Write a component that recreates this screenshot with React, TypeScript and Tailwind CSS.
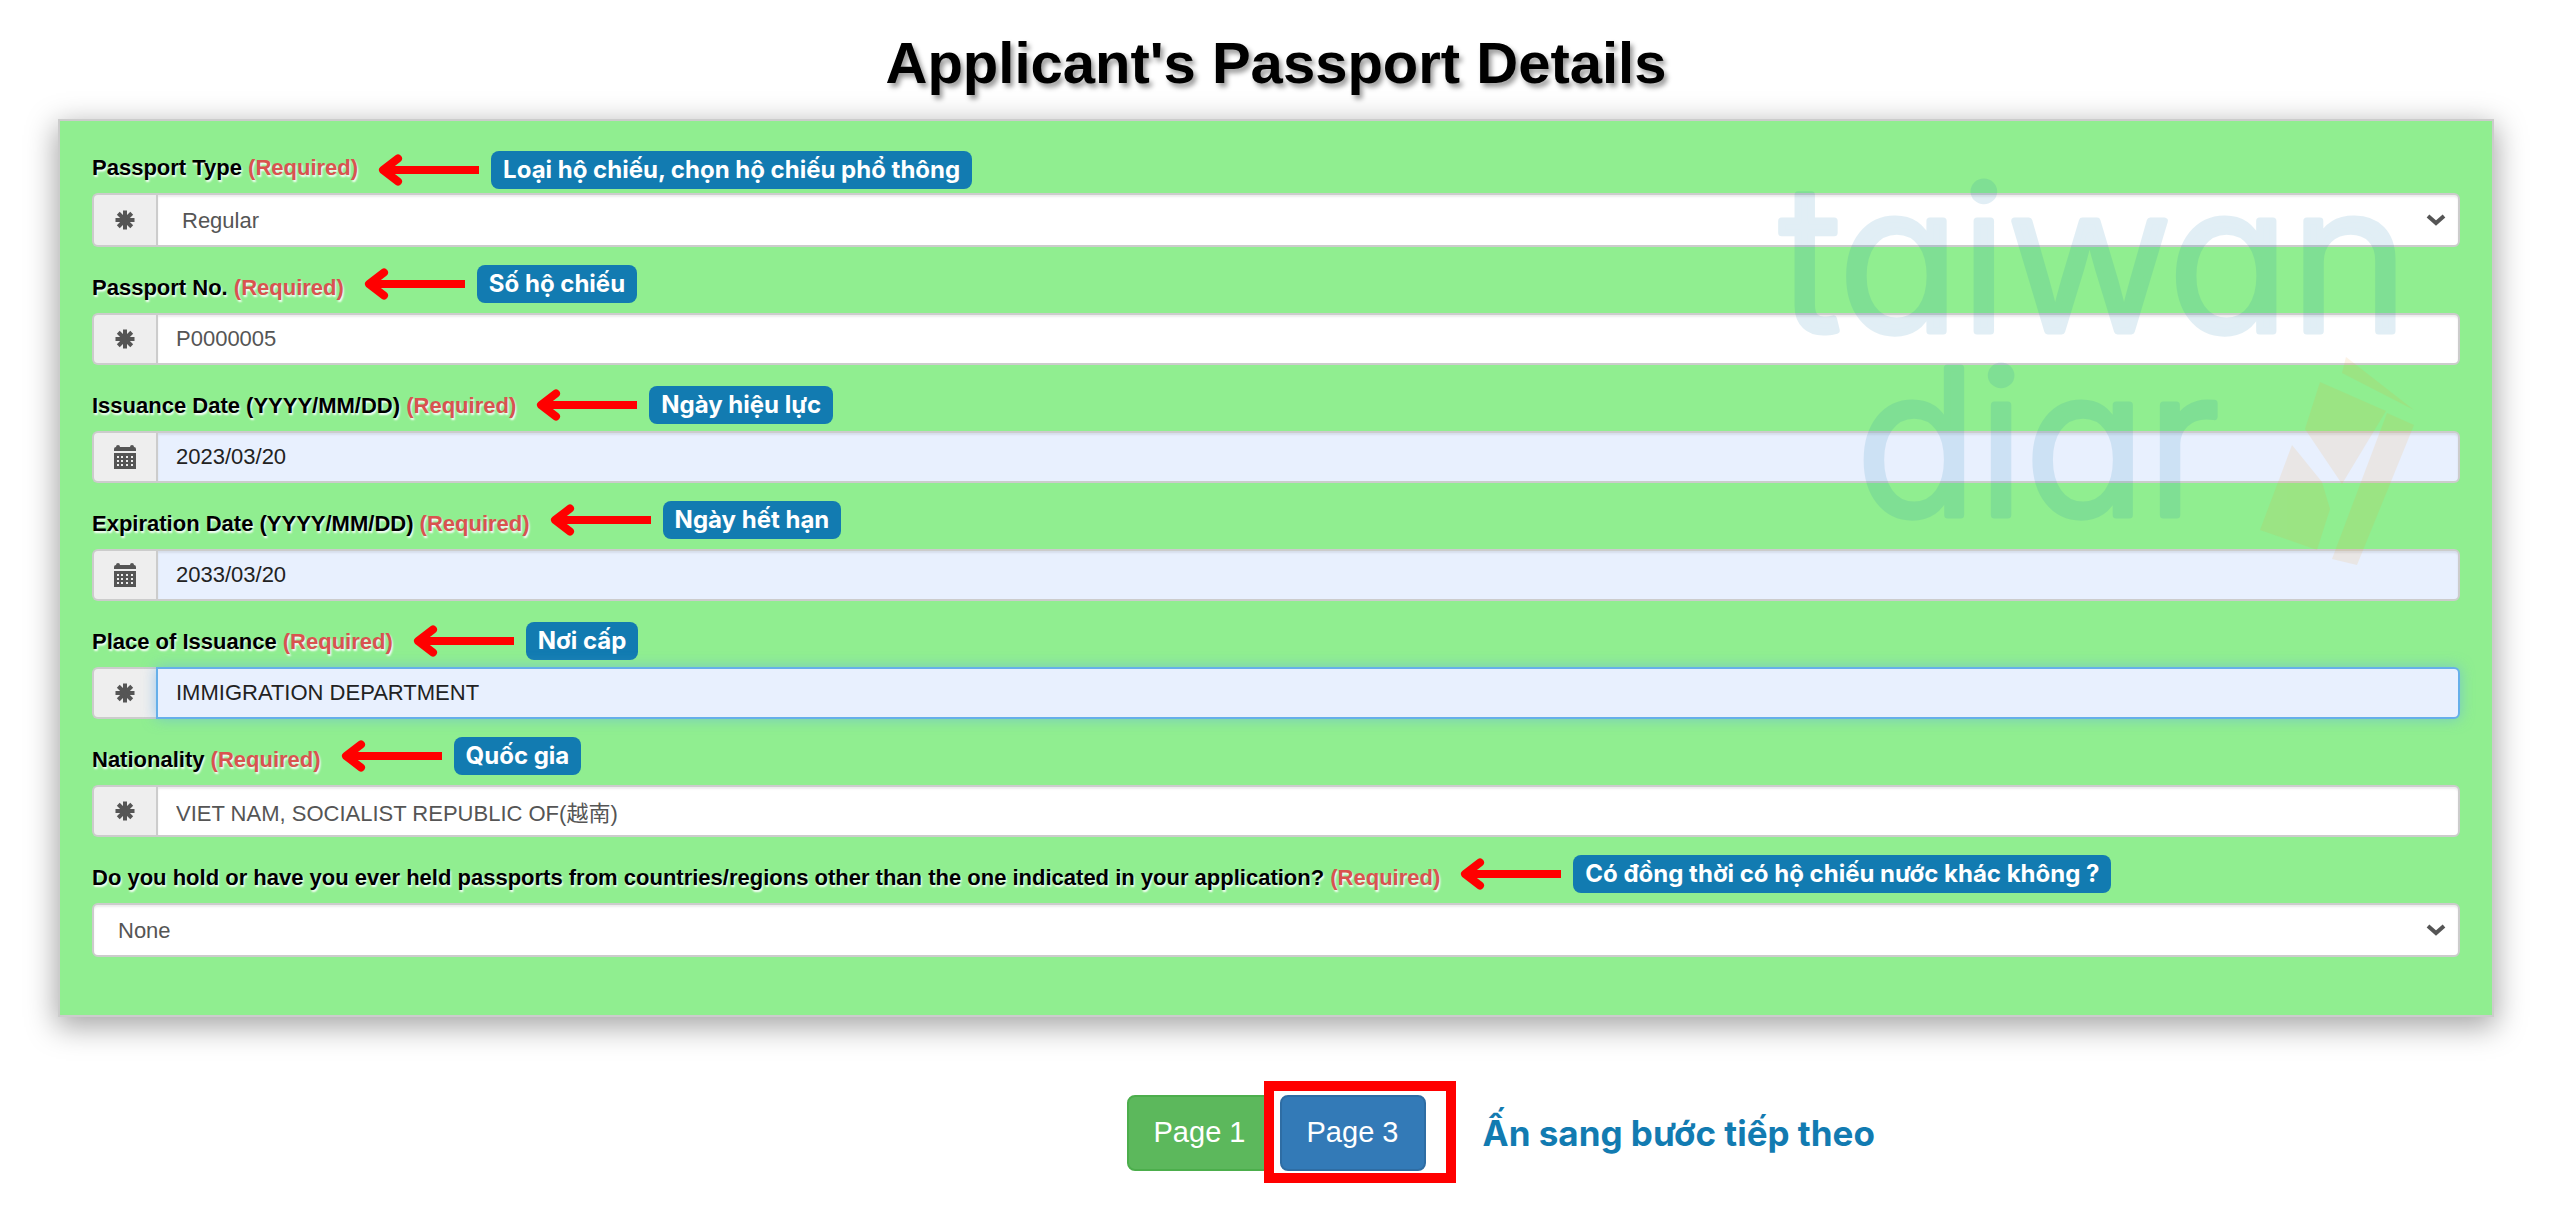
import { ReactNode } from "react";

const asteriskAngles = [0, 45, 90, 135];

function AsteriskIcon() {
  return (
    <svg viewBox="0 0 20 20" className="size-5" stroke="#555" strokeWidth="4">
      {asteriskAngles.map((angle) => (
        <path key={angle} d="M10 0.5V19.5" transform={`rotate(${angle} 10 10)`} />
      ))}
    </svg>
  );
}

function CalendarIcon() {
  return (
    <svg viewBox="0 0 22 24" className="h-6 w-[22px]" fill="#555">
      <path d="M0 4Q0 2 2 2Q2 0 4 0T6 2H16Q16 0 18 0T20 2Q22 2 22 4V6H0z" />
      <path
        fillRule="evenodd"
        d="M0 8h22v16H0zM3 11v2h2v-2zM7 11v2h2v-2zM12 11v2h2v-2zM17 11v2h2v-2zM3 15v2h2v-2zM7 15v2h2v-2zM12 15v2h2v-2zM17 15v2h2v-2zM3 19v2h2v-2zM7 19v2h2v-2zM12 19v2h2v-2zM17 19v2h2v-2z"
      />
    </svg>
  );
}

function Arrow() {
  return (
    <svg
      viewBox="0 0 101 32"
      className="h-8 w-[101px] shrink-0"
      fill="none"
      stroke="#ff0000"
      strokeWidth="8"
    >
      <path d="M101 16H8" />
      <path d="M20 4.500L5 16L20 27.500" strokeLinecap="round" strokeLinejoin="round" />
    </svg>
  );
}

function Chevron() {
  return (
    <svg
      viewBox="0 0 20 12"
      className="absolute right-[14px] h-3 w-5 pointer-events-none"
      fill="none"
      stroke="#555"
      strokeWidth="4"
    >
      <path d="M2 2L10 9L18 2" />
    </svg>
  );
}

function Watermark() {
  return (
    <svg
      viewBox="0 0 680 400"
      className="absolute top-[60px] right-8 w-[680px] overflow-visible pointer-events-none"
      aria-hidden="true"
    >
      <g
        fill="#0f7bb0"
        stroke="#0f7bb0"
        strokeWidth="7"
        strokeLinejoin="round"
        opacity="0.12"
        fontSize="202"
        className="font-[Inter,sans-serif] font-light [font-feature-settings:'cv11']"
      >
        <text x="0" y="150">
          taiwan
        </text>
        <text x="76" y="334">
          diar
        </text>
      </g>
      <g fill="#f59a23" opacity="0.11">
        <path d="M566 176L634 229L562 192z" />
        <path d="M540 201L606 230L562 303L525 248z" />
        <path d="M512 264L542 301L550 328L537 369L480 349z" />
        <path d="M607 232L634 244L577 384L552 378z" />
      </g>
    </svg>
  );
}

interface FieldProps {
  id: string;
  label: string;
  note: string;
  noteAlign: string;
  icon?: ReactNode;
  children: ReactNode;
}

function Field({ id, label, note, noteAlign, icon, children }: FieldProps) {
  return (
    <div>
      <div className="flex h-11 mb-1 whitespace-nowrap">
        <label
          htmlFor={id}
          className="self-center text-[22px] font-bold text-black [text-shadow:1px_2px_2px_#fff]"
        >
          {label} <span className="text-[#d9534f]">(Required)</span>
        </label>
        <div className={`flex items-center ml-5 gap-3 ${noteAlign}`}>
          <Arrow />
          <span className="flex items-center h-[38px] px-3 rounded-lg bg-[#127bb1] text-white text-2xl font-bold font-[Inter,sans-serif]">
            {note}
          </span>
        </div>
      </div>
      <div className="flex">
        {icon && (
          <span className="flex items-center justify-center w-16 border-2 border-r-0 border-[#ccc] rounded-l-md bg-[#eee]">
            {icon}
          </span>
        )}
        {children}
      </div>
    </div>
  );
}

const inputClass =
  "flex-1 h-[52px] px-[18px] text-[22px] border-2 rounded-r-md outline-none";
const shadowClass = "border-[#ccc] shadow-[inset_0_2px_2px_rgba(0,0,0,0.08)]";
const selectClass =
  "w-full h-[54px] px-6 text-[22px] text-[#555] bg-white border-2 appearance-none outline-none";

export default function App() {
  return (
    <main className="pt-7 pb-6 pl-[58px] pr-[66px] bg-white font-['Liberation_Sans','Noto_Sans_CJK_TC',sans-serif]">
      <h1 className="text-[58px] leading-[70px] font-bold text-center text-black [text-shadow:3px_4px_5px_rgba(0,0,0,0.4)]">
        Applicant's Passport Details
      </h1>

      <form className="relative mt-[21px] pt-6 pb-[58px] px-8 flex flex-col gap-[18px] bg-[#90ee90] border-2 border-[#ccc] shadow-[0_8px_28px_2px_rgba(0,0,0,0.35)]">
        <Field
          id="type"
          label="Passport Type"
          note="Loại hộ chiếu, chọn hộ chiếu phổ thông"
          noteAlign="self-end"
          icon={<AsteriskIcon />}
        >
          <div className="relative flex flex-1 items-center">
            <select id="type" className={`${selectClass} ${shadowClass} rounded-r-md`}>
              <option>Regular</option>
            </select>
            <Chevron />
          </div>
        </Field>
        <Field
          id="number"
          label="Passport No."
          note="Số hộ chiếu"
          noteAlign="self-start"
          icon={<AsteriskIcon />}
        >
          <input
            id="number"
            defaultValue="P0000005"
            className={`${inputClass} ${shadowClass} bg-white text-[#555]`}
          />
        </Field>
        <Field
          id="issued"
          label="Issuance Date (YYYY/MM/DD)"
          note="Ngày hiệu lực"
          noteAlign="self-center"
          icon={<CalendarIcon />}
        >
          <input
            id="issued"
            defaultValue="2023/03/20"
            className={`${inputClass} ${shadowClass} bg-[#e8f0fe] text-[#222]`}
          />
        </Field>
        <Field
          id="expires"
          label="Expiration Date (YYYY/MM/DD)"
          note="Ngày hết hạn"
          noteAlign="self-start"
          icon={<CalendarIcon />}
        >
          <input
            id="expires"
            defaultValue="2033/03/20"
            className={`${inputClass} ${shadowClass} bg-[#e8f0fe] text-[#222]`}
          />
        </Field>
        <Field
          id="place"
          label="Place of Issuance"
          note="Nơi cấp"
          noteAlign="self-center"
          icon={<AsteriskIcon />}
        >
          <input
            id="place"
            defaultValue="IMMIGRATION DEPARTMENT"
            className={`${inputClass} border-[#66afe9] shadow-[0_0_14px_rgba(102,175,233,0.6)] bg-[#e8f0fe] text-[#222]`}
          />
        </Field>
        <Field
          id="nationality"
          label="Nationality"
          note="Quốc gia"
          noteAlign="self-start"
          icon={<AsteriskIcon />}
        >
          <input
            id="nationality"
            defaultValue="VIET NAM, SOCIALIST REPUBLIC OF(越南)"
            className={`${inputClass} ${shadowClass} bg-white text-[#555]`}
          />
        </Field>
        <Field
          id="other"
          label="Do you hold or have you ever held passports from countries/regions other than the one indicated in your application?"
          note="Có đồng thời có hộ chiếu nước khác không ?"
          noteAlign="self-start"
        >
          <div className="relative flex flex-1 items-center">
            <select id="other" className={`${selectClass} ${shadowClass} rounded-md`}>
              <option>None</option>
            </select>
            <Chevron />
          </div>
        </Field>
        <Watermark />
      </form>

      <div className="grid grid-cols-[1fr_auto_1fr] items-center mt-[78px]">
        <div className="flex col-start-2 gap-[7px] text-[29px] text-white">
          <button
            type="button"
            className="w-[146px] h-[76px] bg-[#5cb85c] border-2 border-[#4cae4c] rounded-lg"
          >
            Page 1
          </button>
          <div className="relative">
            <button
              type="button"
              className="w-[146px] h-[76px] bg-[#337ab7] border-2 border-[#2e6da4] rounded-lg"
            >
              Page 3
            </button>
            {/* Highlight frame */}
            <div className="absolute -top-[14px] -bottom-3 -left-4 -right-[30px] border-[10px] border-[#ff0000] pointer-events-none" />
          </div>
        </div>
        <p className="pl-[57px] text-[35px] leading-10 font-bold text-[#127bb1] font-[Inter,sans-serif]">
          Ấn sang bước tiếp theo
        </p>
      </div>
    </main>
  );
}
